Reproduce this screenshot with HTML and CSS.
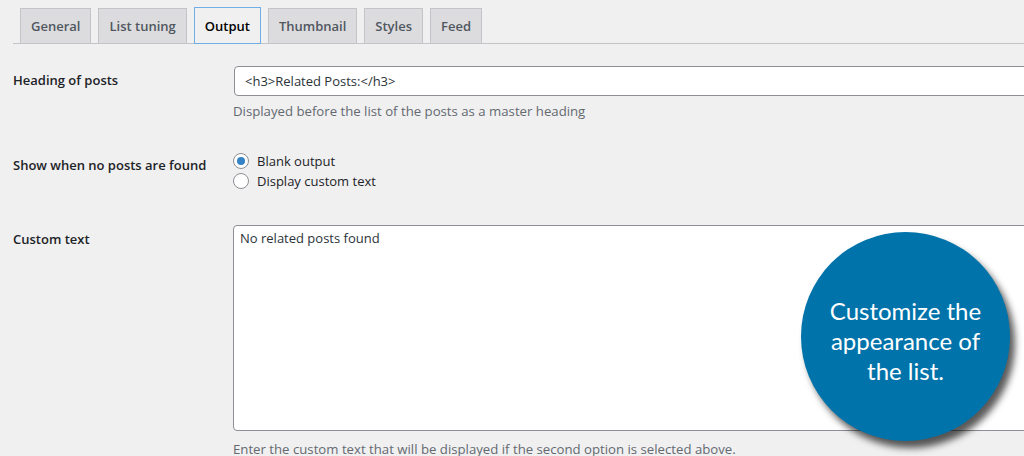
FILE: index.html
```html
<!DOCTYPE html>
<html>

<head>
    <meta charset="utf-8">
    <title>Output settings</title>
    <link rel="stylesheet" href="styles.css">
</head>

<body>
<div id="wrapper">
    <div class="tabs">
        <a class="tab">General</a>
        <a class="tab">List tuning</a>
        <a class="tab active">Output</a>
        <a class="tab">Thumbnail</a>
        <a class="tab">Styles</a>
        <a class="tab">Feed</a>
    </div>

    <div class="form-table">
        <div class="row row-heading">
            <div class="label">Heading of posts</div>
            <div class="field">
                <input type="text" class="text-input" value="<h3>Related Posts:</h3>">
                <p class="description">Displayed before the list of the posts as a master heading</p>
            </div>
        </div>
        <div class="row row-blank">
            <div class="label">Show when no posts are found</div>
            <div class="field">
                <label class="radio"><input type="radio" name="blank" checked> Blank output</label>
                <label class="radio"><input type="radio" name="blank"> Display custom text</label>
            </div>
        </div>
        <div class="row row-custom">
            <div class="label">Custom text</div>
            <div class="field">
                <textarea class="text-area">No related posts found</textarea>
                <p class="description">Enter the custom text that will be displayed if the second option is selected above.</p>
            </div>
        </div>
    </div>
</div>

<div class="callout">
    <p>Customize the<br>appearance of<br>the list.</p>
</div>
</body>

</html>
```

FILE: styles.css
```css
html, body {
    margin: 0;
    padding: 0;
    background-color: #f0f0f1;
    overflow: hidden;
}

body {
    font-family: "Open Sans", "Noto Sans", sans-serif;
    font-size: 13px;
    color: #1d2327;
    width: 1024px;
    height: 456px;
    position: relative;
}

#wrapper {
    padding-left: 13px;
}

/* tabs */
.tabs {
    display: flex;
    flex-direction: row;
    padding-top: 8px;
    padding-left: 7px;
    border-bottom: 1px solid #c3c4c7;
    height: 35px;
}

.tab {
    display: block;
    box-sizing: border-box;
    height: 35px;
    line-height: 35px;
    padding: 0 10px;
    margin-right: 7px;
    border: 1px solid #c3c4c7;
    border-bottom: none;
    background-color: #dcdcde;
    color: #50575e;
    font-size: 13px;
    font-weight: 600;
}

.tab.active {
    height: 37px;
    margin-top: -1px;
    border: 1px solid #72aee6;
    background-color: #f0f0f1;
    color: #000;
    line-height: 37px;
}

/* form rows */
.row {
    display: flex;
    flex-direction: row;
}

.label {
    width: 220px;
    flex-shrink: 0;
    font-weight: 600;
    line-height: 20px;
}

.field {
    flex: 1;
}

.row-heading {
    margin-top: 22px;
}

.row-heading .label {
    padding-top: 4px;
}

.row-blank {
    margin-top: 30px;
}

.row-blank .label {
    padding-top: 4px;
}

.row-custom {
    margin-top: 34px;
}

.row-custom .label {
    padding-top: 4px;
}

.text-input {
    display: block;
    box-sizing: border-box;
    width: 860px;
    height: 30px;
    margin: 0 0 0 1px;
    padding: 0 10px;
    border: 1px solid #8c8f94;
    border-radius: 4px;
    background: #fff;
    font-family: inherit;
    font-size: 13px;
    color: #2c3338;
}

.description {
    margin: 5px 0 0;
    line-height: 20px;
    color: #646970;
    font-size: 13.2px;
}

.row-custom .description {
    margin-top: 8px;
}

.radio {
    display: flex;
    align-items: center;
    height: 20px;
    line-height: 20px;
}

.radio input {
    appearance: none;
    -webkit-appearance: none;
    box-sizing: border-box;
    width: 16px;
    height: 16px;
    margin: 0 8px 0 0;
    border: 1px solid #8c8f94;
    border-radius: 50%;
    background: #fff;
    position: relative;
}

.radio input:checked::before {
    content: "";
    position: absolute;
    left: 3px;
    top: 3px;
    width: 8px;
    height: 8px;
    border-radius: 50%;
    background: #3582c4;
}

.text-area {
    display: block;
    box-sizing: border-box;
    width: 860px;
    height: 206px;
    margin: 0;
    padding: 1px 6px;
    border: 1px solid #8c8f94;
    border-radius: 4px;
    background: #fff;
    font-family: inherit;
    font-size: 13px;
    line-height: 22px;
    color: #2c3338;
    resize: none;
}

/* blue callout bubble over the page */
.callout {
    position: absolute;
    left: 801px;
    top: 232px;
    width: 209px;
    height: 209px;
    border-radius: 50%;
    background-color: #0073aa;
    box-shadow: 5px 7px 7px rgba(0, 0, 0, 0.65);
    display: flex;
    align-items: center;
    justify-content: center;
}

.callout p {
    margin: 0;
    padding-top: 8px;
    color: #fff;
    font-family: "Lato", "Open Sans", sans-serif;
    font-size: 24px;
    line-height: 30px;
    text-align: center;
}
```
